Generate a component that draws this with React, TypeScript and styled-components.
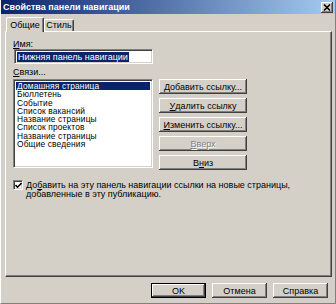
import React from "react";
import styled, { createGlobalStyle } from "styled-components";

const Global = createGlobalStyle`
  html, body { margin: 0; padding: 0; background: #d4d0c8; }
  body { font-family: "Liberation Sans", Arial, sans-serif; font-size: 9px; color: #000; }
  * { box-sizing: border-box; }
`;

const Window = styled.div`
  width: 336px;
  height: 304px;
  background: #d4d0c8;
  display: flex;
  flex-direction: column;
  border-right: 1px solid #808080;
  border-bottom: 1px solid #808080;
  border-left: 1px solid #ffffff;
`;

const TitleBar = styled.div`
  height: 14px;
  display: flex;
  align-items: center;
  justify-content: space-between;
  padding: 0 2px 0 2px;
  background: linear-gradient(to right, #0a246a, #a6caf0);
`;

const Title = styled.span`
  color: #fff;
  font-weight: bold;
  font-size: 9px;
  line-height: 12px;
  white-space: nowrap;
`;

const CloseButton = styled.div`
  width: 12px;
  height: 11px;
  background: #d4d0c8;
  box-shadow: inset -1px -1px #404040, inset 1px 1px #fff, inset -2px -2px #808080;
  display: flex;
  align-items: center;
  justify-content: center;
`;

const Body = styled.div`
  padding: 3px 0 0 4px;
  display: flex;
  flex-direction: column;
`;

const TabRow = styled.div`
  height: 14px;
  display: flex;
  align-items: flex-end;
  padding-left: 1px;
`;

const Tab = styled.div<{ $active?: boolean }>`
  position: relative;
  z-index: ${(p) => (p.$active ? 1 : 0)};
  width: ${(p) => (p.$active ? 38 : 30)}px;
  height: ${(p) => (p.$active ? 15 : 12)}px;
  margin-bottom: ${(p) => (p.$active ? -1 : 0)}px;
  background: #d4d0c8;
  border-top: 1px solid #fff;
  border-left: 1px solid #fff;
  border-right: 1px solid #404040;
  border-top-left-radius: 2px;
  border-top-right-radius: 2px;
  box-shadow: inset -1px 0 #808080;
  display: flex;
  align-items: ${(p) => (p.$active ? "center" : "flex-start")};
  justify-content: center;
  line-height: 10px;
  padding-bottom: ${(p) => (p.$active ? 1 : 0)}px;
`;

const Panel = styled.div`
  width: 327px;
  height: 246px;
  border-top: 1px solid #fff;
  border-left: 1px solid #fff;
  border-right: 1px solid #404040;
  border-bottom: 1px solid #404040;
  box-shadow: inset -1px -1px #808080;
  padding: 8px 0 0 7px;
  display: flex;
  flex-direction: column;
`;

const Label = styled.div<{ $mt?: number }>`
  line-height: 9px;
  height: 9px;
  margin-top: ${(p) => p.$mt ?? 0}px;
`;

const Sunken = styled.div`
  background: #fff;
  border-top: 1px solid #808080;
  border-left: 1px solid #808080;
  border-right: 1px solid #fff;
  border-bottom: 1px solid #fff;
  box-shadow: inset 1px 1px #404040, inset -1px -1px #d4d0c8;
`;

const TextField = styled(Sunken)`
  margin-left: 1px;
  width: 139px;
  height: 15px;
  padding: 2px 0 0 2px;
  display: flex;
`;

const Selected = styled.span`
  background: #0a246a;
  color: #fff;
  line-height: 10px;
  height: 10px;
  padding: 0 1px;
  white-space: nowrap;
`;

const ListRow = styled.div`
  display: flex;
  align-items: flex-start;
  margin-top: 2px;
`;

const ListBox = styled(Sunken)`
  width: 140px;
  height: 89px;
  padding: 2px 2px 0 2px;
  display: flex;
  flex-direction: column;
`;

const Item = styled.div<{ $sel?: boolean }>`
  height: 8.25px;
  line-height: 8.25px;
  font-size: 8.4px;
  letter-spacing: 0.15px;
  padding-left: 1px;
  white-space: nowrap;
  background: ${(p) => (p.$sel ? "#0a246a" : "transparent")};
  color: ${(p) => (p.$sel ? "#fff" : "#000")};
`;

const ButtonCol = styled.div`
  margin-left: 6px;
  display: flex;
  flex-direction: column;
  gap: 4px;
`;

const Button = styled.div<{ $w?: number; $disabled?: boolean; $default?: boolean }>`
  width: ${(p) => p.$w ?? 88}px;
  height: 15px;
  background: #d4d0c8;
  display: flex;
  align-items: center;
  justify-content: center;
  line-height: 10px;
  white-space: nowrap;
  color: ${(p) => (p.$disabled ? "#808080" : "#000")};
  text-shadow: ${(p) => (p.$disabled ? "1px 1px #fff" : "none")};
  box-shadow: ${(p) =>
    p.$default
      ? "inset -1px -1px #000, inset 1px 1px #000, inset -2px -2px #404040, inset 2px 2px #fff, inset -3px -3px #808080"
      : "inset -1px -1px #404040, inset 1px 1px #fff, inset -2px -2px #808080"};
`;

const CheckRow = styled.div`
  display: flex;
  align-items: flex-start;
  margin-top: 10px;
`;

const CheckBox = styled(Sunken)`
  width: 10px;
  height: 10px;
  flex: none;
  display: flex;
  align-items: center;
  justify-content: center;
`;

const CheckText = styled.div`
  margin-left: 3px;
  margin-top: 1px;
  line-height: 9px;
`;

const Footer = styled.div`
  display: flex;
  justify-content: flex-end;
  gap: 6px;
  padding: 6px 7px 0 0;
`;

export default function App() {
  const items = [
    "Домашняя страница",
    "Бюллетень",
    "Событие",
    "Список вакансий",
    "Название страницы",
    "Список проектов",
    "Название страницы",
    "Общие сведения",
  ];
  return (
    <>
      <Global />
      <Window>
        <TitleBar>
          <Title>Свойства панели навигации</Title>
          <CloseButton>
            <svg width="8" height="7" viewBox="0 0 8 7">
              <path d="M1 0.5 L7 6.5 M7 0.5 L1 6.5" stroke="#000" strokeWidth="1.5" />
            </svg>
          </CloseButton>
        </TitleBar>
        <Body>
          <TabRow>
            <Tab $active>Общие</Tab>
            <Tab>Стиль</Tab>
          </TabRow>
          <Panel>
            <Label>
              <u>И</u>мя:
            </Label>
            <TextField>
              <Selected>Нижняя панель навигации</Selected>
            </TextField>
            <Label $mt={4}>
              <u>С</u>вязи...
            </Label>
            <ListRow>
              <ListBox>
                {items.map((t, i) => (
                  <Item key={i} $sel={i === 0}>
                    {t}
                  </Item>
                ))}
              </ListBox>
              <ButtonCol>
                <Button>
                  <u>Д</u>обавить ссылку...
                </Button>
                <Button>
                  <u>У</u>далить ссылку
                </Button>
                <Button>
                  <u>И</u>зменить ссылку...
                </Button>
                <Button $disabled>
                  <u>В</u>верх
                </Button>
                <Button>
                  В<u>н</u>из
                </Button>
              </ButtonCol>
            </ListRow>
            <CheckRow>
              <CheckBox>
                <svg width="7" height="7" viewBox="0 0 7 7">
                  <path d="M0.5 3 L2.5 5.2 L6.5 1" stroke="#000" strokeWidth="1.6" fill="none" />
                </svg>
              </CheckBox>
              <CheckText>
                До<u>б</u>авить на эту панель навигации ссылки на новые страницы,
                <br />
                добавленные в эту публикацию.
              </CheckText>
            </CheckRow>
          </Panel>
        </Body>
        <Footer>
          <Button $w={55} $default>
            OK
          </Button>
          <Button $w={55}>Отмена</Button>
          <Button $w={55}>Справка</Button>
        </Footer>
      </Window>
    </>
  );
}
